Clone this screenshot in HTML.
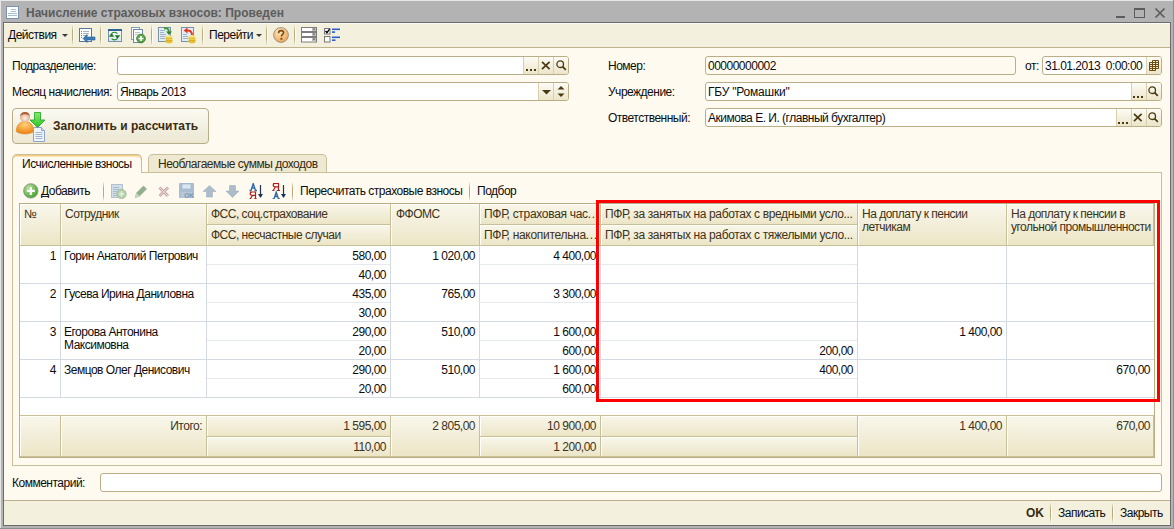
<!DOCTYPE html>
<html><head><meta charset="utf-8"><style>
*{box-sizing:border-box}
html,body{margin:0;padding:0}
body{width:1174px;height:529px;overflow:hidden;position:relative;background:#b3b3b3;font-family:"Liberation Sans",sans-serif;font-size:11px;color:#0c0c0c}
.a{position:absolute}
.t{position:absolute;white-space:nowrap;line-height:13px;font-size:12px;letter-spacing:-0.5px}
.inp{position:absolute;background:#fff;border:1px solid #b9ae86;border-radius:3px;height:19px;overflow:hidden}
.ib{position:absolute;top:0;bottom:0;width:15px;border-left:1px solid #d8cfae;background:linear-gradient(#fdfcf6,#ece5c9)}
svg{position:absolute}
</style></head><body>
<div class="a" style="left:0px;top:0px;width:1174px;height:1px;background:#e6e6e6"></div>
<div class="a" style="left:0px;top:0px;width:1px;height:529px;background:#e6e6e6"></div>
<div class="a" style="left:1173px;top:0px;width:1px;height:529px;background:#8e8e8e"></div>
<div class="a" style="left:0px;top:528px;width:1174px;height:1px;background:#8e8e8e"></div>
<svg style="left:6px;top:6px" width="13" height="13"><rect x="0.5" y="0.5" width="12" height="12" fill="#fdfeff" stroke="#7b93b0"/><path d="M5 3.5h5M5 5.5h5M2 7.5h9M2 9.5h9" stroke="#aabcd0" stroke-width="1"/></svg>
<div class="t" style="left:26px;top:7px;font-size:12px;font-weight:bold;letter-spacing:0;color:#5c5c5c">Начисление страховых взносов: Проведен</div>
<div class="a" style="left:1116px;top:16px;width:9px;height:2px;background:#5c5c5c"></div>
<div class="a" style="left:1134px;top:8px;width:11px;height:10px;border:1px solid #5c5c5c;border-top-width:2px"></div>
<svg style="left:1154px;top:7px" width="12" height="12"><path d="M1.5 1.5L10.5 10.5M10.5 1.5L1.5 10.5" stroke="#5c5c5c" stroke-width="1.7"/></svg>
<div class="a" style="left:3px;top:22px;width:1168px;height:504px;border:1px solid #6c6c6c;background:#fefaf0"></div>
<div class="a" style="left:4px;top:23px;width:1166px;height:24px;background:#f3f0de;border-top:1px solid #fdfcf4"></div>
<div class="a" style="left:4px;top:47px;width:1166px;height:1px;background:#bdb28b"></div>
<div class="t" style="left:8px;top:29px;">Действия</div>
<svg style="left:62px;top:34px" width="6" height="3"><path d="M0 0h6L3 3z" fill="#3a3a3a"/></svg>
<div class="a" style="left:72px;top:25px;width:1px;height:20px;background:linear-gradient(rgba(184,170,120,0.1),#b9ab7c 30%,#b9ab7c 70%,rgba(184,170,120,0.1))"></div>
<div class="a" style="left:73px;top:25px;width:1px;height:20px;background:linear-gradient(rgba(255,255,255,0.2),#fffff8 30%,#fffff8 70%,rgba(255,255,255,0.2))"></div>
<div class="a" style="left:100px;top:25px;width:1px;height:20px;background:linear-gradient(rgba(184,170,120,0.1),#b9ab7c 30%,#b9ab7c 70%,rgba(184,170,120,0.1))"></div>
<div class="a" style="left:101px;top:25px;width:1px;height:20px;background:linear-gradient(rgba(255,255,255,0.2),#fffff8 30%,#fffff8 70%,rgba(255,255,255,0.2))"></div>
<div class="a" style="left:151px;top:25px;width:1px;height:20px;background:linear-gradient(rgba(184,170,120,0.1),#b9ab7c 30%,#b9ab7c 70%,rgba(184,170,120,0.1))"></div>
<div class="a" style="left:152px;top:25px;width:1px;height:20px;background:linear-gradient(rgba(255,255,255,0.2),#fffff8 30%,#fffff8 70%,rgba(255,255,255,0.2))"></div>
<div class="a" style="left:202px;top:25px;width:1px;height:20px;background:linear-gradient(rgba(184,170,120,0.1),#b9ab7c 30%,#b9ab7c 70%,rgba(184,170,120,0.1))"></div>
<div class="a" style="left:203px;top:25px;width:1px;height:20px;background:linear-gradient(rgba(255,255,255,0.2),#fffff8 30%,#fffff8 70%,rgba(255,255,255,0.2))"></div>
<div class="a" style="left:266px;top:25px;width:1px;height:20px;background:linear-gradient(rgba(184,170,120,0.1),#b9ab7c 30%,#b9ab7c 70%,rgba(184,170,120,0.1))"></div>
<div class="a" style="left:267px;top:25px;width:1px;height:20px;background:linear-gradient(rgba(255,255,255,0.2),#fffff8 30%,#fffff8 70%,rgba(255,255,255,0.2))"></div>
<div class="a" style="left:294px;top:25px;width:1px;height:20px;background:linear-gradient(rgba(184,170,120,0.1),#b9ab7c 30%,#b9ab7c 70%,rgba(184,170,120,0.1))"></div>
<div class="a" style="left:295px;top:25px;width:1px;height:20px;background:linear-gradient(rgba(255,255,255,0.2),#fffff8 30%,#fffff8 70%,rgba(255,255,255,0.2))"></div>
<div class="t" style="left:209px;top:29px;">Перейти</div>
<svg style="left:256px;top:34px" width="6" height="3"><path d="M0 0h6L3 3z" fill="#3a3a3a"/></svg>
<div class="t" style="left:12px;top:60px;">Подразделение:</div>
<div class="t" style="left:12px;top:86px;">Месяц начисления:</div>
<div class="inp" style="left:117px;top:56px;width:452px"><div class="ib" style="left:405px"></div><div class="ib" style="left:420px"></div><div class="ib" style="left:435px"></div></div>
<div class="inp" style="left:117px;top:82px;width:452px"><div class="t" style="left:2px;top:3px">Январь 2013</div><div class="ib" style="left:420px"></div><div class="ib" style="left:435px"></div></div>
<div class="t" style="left:608px;top:60px;">Номер:</div>
<div class="t" style="left:608px;top:86px;">Учреждение:</div>
<div class="t" style="left:608px;top:112px;">Ответственный:</div>
<div class="inp" style="left:705px;top:56px;width:311px;background:#fefaf0"><div class="t" style="left:2px;top:3px">00000000002</div></div>
<div class="t" style="left:1025px;top:60px;">от:</div>
<div class="inp" style="left:1042px;top:56px;width:120px"><div class="t" style="left:2px;top:3px">31.01.2013&nbsp; 0:00:00</div><div class="ib" style="left:103px"></div></div>
<div class="inp" style="left:705px;top:82px;width:457px"><div class="t" style="left:2px;top:3px;letter-spacing:-0.2px">ГБУ "Ромашки"</div><div class="ib" style="left:425px"></div><div class="ib" style="left:440px"></div></div>
<div class="inp" style="left:705px;top:108px;width:457px"><div class="t" style="left:2px;top:3px">Акимова Е. И. (главный бухгалтер)</div><div class="ib" style="left:410px"></div><div class="ib" style="left:425px"></div><div class="ib" style="left:440px"></div></div>
<div class="a" style="left:12px;top:108px;width:197px;height:36px;border:1px solid #b9ae86;border-radius:4px;background:linear-gradient(#fbfaf3,#ece7d2)"></div>
<div class="t" style="left:53px;top:120px;font-size:12px;font-weight:bold;letter-spacing:0;color:#3a2c10">Заполнить и рассчитать</div>
<div class="a" style="left:148px;top:154px;width:179px;height:19px;border:1px solid #c8be98;border-bottom:none;border-radius:5px 5px 0 0;background:#efe9d3"></div>
<div class="t" style="left:158px;top:158px;color:#33280e">Необлагаемые суммы доходов</div>
<div class="a" style="left:12px;top:172px;width:1150px;height:294px;border:1px solid #c8be98;background:#fefaf0"></div>
<div class="a" style="left:12px;top:154px;width:130px;height:19px;border:1px solid #c8be98;border-bottom:none;border-radius:5px 5px 0 0;background:#fefaf0;box-shadow:inset 0 1px 0 #f6cb7e,inset 0 2px 0 #fae3b4"></div>
<div class="t" style="left:22px;top:158px;">Исчисленные взносы</div>
<div class="t" style="left:41px;top:185px;">Добавить</div>
<div class="a" style="left:103px;top:182px;width:1px;height:19px;background:linear-gradient(rgba(184,170,120,0.1),#b9ab7c 30%,#b9ab7c 70%,rgba(184,170,120,0.1))"></div>
<div class="a" style="left:104px;top:182px;width:1px;height:19px;background:linear-gradient(rgba(255,255,255,0.2),#fffff8 30%,#fffff8 70%,rgba(255,255,255,0.2))"></div>
<div class="a" style="left:292px;top:182px;width:1px;height:19px;background:linear-gradient(rgba(184,170,120,0.1),#b9ab7c 30%,#b9ab7c 70%,rgba(184,170,120,0.1))"></div>
<div class="a" style="left:293px;top:182px;width:1px;height:19px;background:linear-gradient(rgba(255,255,255,0.2),#fffff8 30%,#fffff8 70%,rgba(255,255,255,0.2))"></div>
<div class="a" style="left:469px;top:182px;width:1px;height:19px;background:linear-gradient(rgba(184,170,120,0.1),#b9ab7c 30%,#b9ab7c 70%,rgba(184,170,120,0.1))"></div>
<div class="a" style="left:470px;top:182px;width:1px;height:19px;background:linear-gradient(rgba(255,255,255,0.2),#fffff8 30%,#fffff8 70%,rgba(255,255,255,0.2))"></div>
<div class="t" style="left:300px;top:185px;">Пересчитать страховые взносы</div>
<div class="t" style="left:477px;top:185px;">Подбор</div>
<div class="a" style="left:19px;top:203px;width:1136px;height:255px;border:1px solid #b9ae86;background:#fff"></div>
<div class="a" style="left:20px;top:204px;width:1134px;height:1px;background:#fff"></div>
<div class="a" style="left:20px;top:204px;width:41px;height:42px;background:linear-gradient(#f9f7ec,#ece5c6);border-right:1px solid #c9bf99;border-bottom:1px solid #c9bf99;box-shadow:inset 1px 1px 0 #fffef9"></div>
<div class="a" style="left:61px;top:204px;width:146px;height:42px;background:linear-gradient(#f9f7ec,#ece5c6);border-right:1px solid #c9bf99;border-bottom:1px solid #c9bf99;box-shadow:inset 1px 1px 0 #fffef9"></div>
<div class="a" style="left:207px;top:204px;width:184px;height:21px;background:linear-gradient(#f9f7ec,#ece5c6);border-right:1px solid #c9bf99;border-bottom:1px solid #c9bf99;box-shadow:inset 1px 1px 0 #fffef9"></div>
<div class="a" style="left:207px;top:225px;width:184px;height:21px;background:linear-gradient(#f9f7ec,#ece5c6);border-right:1px solid #c9bf99;border-bottom:1px solid #c9bf99;box-shadow:inset 1px 1px 0 #fffef9"></div>
<div class="a" style="left:391px;top:204px;width:89px;height:42px;background:linear-gradient(#f9f7ec,#ece5c6);border-right:1px solid #c9bf99;border-bottom:1px solid #c9bf99;box-shadow:inset 1px 1px 0 #fffef9"></div>
<div class="a" style="left:480px;top:204px;width:121px;height:21px;background:linear-gradient(#f9f7ec,#ece5c6);border-right:1px solid #c9bf99;border-bottom:1px solid #c9bf99;box-shadow:inset 1px 1px 0 #fffef9"></div>
<div class="a" style="left:480px;top:225px;width:121px;height:21px;background:linear-gradient(#f9f7ec,#ece5c6);border-right:1px solid #c9bf99;border-bottom:1px solid #c9bf99;box-shadow:inset 1px 1px 0 #fffef9"></div>
<div class="a" style="left:601px;top:204px;width:257px;height:21px;background:linear-gradient(#f9f7ec,#ece5c6);border-right:1px solid #c9bf99;border-bottom:1px solid #c9bf99;box-shadow:inset 1px 1px 0 #fffef9"></div>
<div class="a" style="left:601px;top:225px;width:257px;height:21px;background:linear-gradient(#f9f7ec,#ece5c6);border-right:1px solid #c9bf99;border-bottom:1px solid #c9bf99;box-shadow:inset 1px 1px 0 #fffef9"></div>
<div class="a" style="left:858px;top:204px;width:149px;height:42px;background:linear-gradient(#f9f7ec,#ece5c6);border-right:1px solid #c9bf99;border-bottom:1px solid #c9bf99;box-shadow:inset 1px 1px 0 #fffef9"></div>
<div class="a" style="left:1007px;top:204px;width:147px;height:42px;background:linear-gradient(#f9f7ec,#ece5c6);border-right:1px solid #c9bf99;border-bottom:1px solid #c9bf99;box-shadow:inset 1px 1px 0 #fffef9"></div>
<div class="t" style="left:24px;top:208px;color:#3e3216">№</div>
<div class="t" style="left:65px;top:208px;color:#3e3216">Сотрудник</div>
<div class="t" style="left:211px;top:208px;color:#3e3216">ФСС, соц.страхование</div>
<div class="t" style="left:211px;top:229px;color:#3e3216">ФСС, несчастные случаи</div>
<div class="t" style="left:396px;top:208px;color:#3e3216">ФФОМС</div>
<div class="t" style="left:484px;top:208px;color:#3e3216;letter-spacing:-0.3px">ПФР, страховая час<span style="letter-spacing:0.6px">...</span></div>
<div class="t" style="left:484px;top:229px;color:#3e3216;letter-spacing:-0.3px">ПФР, накопительна<span style="letter-spacing:0.6px">...</span></div>
<div class="t" style="left:605px;top:208px;color:#3e3216;letter-spacing:-0.37px">ПФР, за занятых на работах с вредными усло...</div>
<div class="t" style="left:605px;top:229px;color:#3e3216;letter-spacing:-0.37px">ПФР, за занятых на работах с тяжелыми усло...</div>
<div class="t" style="left:862px;top:208px;color:#3e3216">На доплату к пенсии</div>
<div class="t" style="left:862px;top:221px;color:#3e3216">летчикам</div>
<div class="t" style="left:1011px;top:208px;color:#3e3216">На доплату к пенсии в</div>
<div class="t" style="left:1011px;top:221px;color:#3e3216">угольной промышленности</div>
<div class="a" style="left:20px;top:283px;width:1134px;height:1px;background:#d4dae2"></div>
<div class="a" style="left:207px;top:264px;width:183px;height:1px;background:#e6e9ee"></div>
<div class="a" style="left:480px;top:264px;width:120px;height:1px;background:#e6e9ee"></div>
<div class="a" style="left:601px;top:264px;width:256px;height:1px;background:#e6e9ee"></div>
<div class="a" style="left:20px;top:321px;width:1134px;height:1px;background:#d4dae2"></div>
<div class="a" style="left:207px;top:302px;width:183px;height:1px;background:#e6e9ee"></div>
<div class="a" style="left:480px;top:302px;width:120px;height:1px;background:#e6e9ee"></div>
<div class="a" style="left:601px;top:302px;width:256px;height:1px;background:#e6e9ee"></div>
<div class="a" style="left:20px;top:359px;width:1134px;height:1px;background:#d4dae2"></div>
<div class="a" style="left:207px;top:340px;width:183px;height:1px;background:#e6e9ee"></div>
<div class="a" style="left:480px;top:340px;width:120px;height:1px;background:#e6e9ee"></div>
<div class="a" style="left:601px;top:340px;width:256px;height:1px;background:#e6e9ee"></div>
<div class="a" style="left:20px;top:397px;width:1134px;height:1px;background:#d4dae2"></div>
<div class="a" style="left:207px;top:378px;width:183px;height:1px;background:#e6e9ee"></div>
<div class="a" style="left:480px;top:378px;width:120px;height:1px;background:#e6e9ee"></div>
<div class="a" style="left:601px;top:378px;width:256px;height:1px;background:#e6e9ee"></div>
<div class="a" style="left:60px;top:246px;width:1px;height:151px;background:#d4dae2"></div>
<div class="a" style="left:206px;top:246px;width:1px;height:151px;background:#d4dae2"></div>
<div class="a" style="left:390px;top:246px;width:1px;height:151px;background:#d4dae2"></div>
<div class="a" style="left:479px;top:246px;width:1px;height:151px;background:#d4dae2"></div>
<div class="a" style="left:600px;top:246px;width:1px;height:151px;background:#d4dae2"></div>
<div class="a" style="left:857px;top:246px;width:1px;height:151px;background:#d4dae2"></div>
<div class="a" style="left:1006px;top:246px;width:1px;height:151px;background:#d4dae2"></div>
<div class="t" style="right:1118px;top:250px;">1</div>
<div class="t" style="left:64px;top:250px;">Горин Анатолий Петрович</div>
<div class="t" style="right:788px;top:250px;">580,00</div>
<div class="t" style="right:788px;top:269px;">40,00</div>
<div class="t" style="right:699px;top:250px;">1 020,00</div>
<div class="t" style="right:578px;top:250px;">4 400,00</div>
<div class="t" style="right:578px;top:269px;"></div>
<div class="t" style="right:321px;top:250px;"></div>
<div class="t" style="right:321px;top:269px;"></div>
<div class="t" style="right:172px;top:250px;"></div>
<div class="t" style="right:24px;top:250px;"></div>
<div class="t" style="right:1118px;top:288px;">2</div>
<div class="t" style="left:64px;top:288px;">Гусева Ирина Даниловна</div>
<div class="t" style="right:788px;top:288px;">435,00</div>
<div class="t" style="right:788px;top:307px;">30,00</div>
<div class="t" style="right:699px;top:288px;">765,00</div>
<div class="t" style="right:578px;top:288px;">3 300,00</div>
<div class="t" style="right:578px;top:307px;"></div>
<div class="t" style="right:321px;top:288px;"></div>
<div class="t" style="right:321px;top:307px;"></div>
<div class="t" style="right:172px;top:288px;"></div>
<div class="t" style="right:24px;top:288px;"></div>
<div class="t" style="right:1118px;top:326px;">3</div>
<div class="t" style="left:64px;top:326px;">Егорова Антонина</div>
<div class="t" style="left:64px;top:339px;">Максимовна</div>
<div class="t" style="right:788px;top:326px;">290,00</div>
<div class="t" style="right:788px;top:345px;">20,00</div>
<div class="t" style="right:699px;top:326px;">510,00</div>
<div class="t" style="right:578px;top:326px;">1 600,00</div>
<div class="t" style="right:578px;top:345px;">600,00</div>
<div class="t" style="right:321px;top:326px;"></div>
<div class="t" style="right:321px;top:345px;">200,00</div>
<div class="t" style="right:172px;top:326px;">1 400,00</div>
<div class="t" style="right:24px;top:326px;"></div>
<div class="t" style="right:1118px;top:364px;">4</div>
<div class="t" style="left:64px;top:364px;">Земцов Олег Денисович</div>
<div class="t" style="right:788px;top:364px;">290,00</div>
<div class="t" style="right:788px;top:383px;">20,00</div>
<div class="t" style="right:699px;top:364px;">510,00</div>
<div class="t" style="right:578px;top:364px;">1 600,00</div>
<div class="t" style="right:578px;top:383px;">600,00</div>
<div class="t" style="right:321px;top:364px;">400,00</div>
<div class="t" style="right:321px;top:383px;"></div>
<div class="t" style="right:172px;top:364px;"></div>
<div class="t" style="right:24px;top:364px;">670,00</div>
<div class="a" style="left:20px;top:415px;width:1134px;height:1px;background:#c9bf99"></div>
<div class="a" style="left:20px;top:416px;width:41px;height:41px;background:linear-gradient(#f9f7ec,#ece5c6);border-right:1px solid #c9bf99;border-bottom:1px solid #c9bf99;box-shadow:inset 1px 1px 0 #fffef9"></div>
<div class="a" style="left:61px;top:416px;width:146px;height:41px;background:linear-gradient(#f9f7ec,#ece5c6);border-right:1px solid #c9bf99;border-bottom:1px solid #c9bf99;box-shadow:inset 1px 1px 0 #fffef9"></div>
<div class="a" style="left:207px;top:416px;width:184px;height:21px;background:linear-gradient(#f9f7ec,#ece5c6);border-right:1px solid #c9bf99;border-bottom:1px solid #c9bf99;box-shadow:inset 1px 1px 0 #fffef9"></div>
<div class="a" style="left:207px;top:437px;width:184px;height:20px;background:linear-gradient(#f9f7ec,#ece5c6);border-right:1px solid #c9bf99;border-bottom:1px solid #c9bf99;box-shadow:inset 1px 1px 0 #fffef9"></div>
<div class="a" style="left:391px;top:416px;width:89px;height:41px;background:linear-gradient(#f9f7ec,#ece5c6);border-right:1px solid #c9bf99;border-bottom:1px solid #c9bf99;box-shadow:inset 1px 1px 0 #fffef9"></div>
<div class="a" style="left:480px;top:416px;width:121px;height:21px;background:linear-gradient(#f9f7ec,#ece5c6);border-right:1px solid #c9bf99;border-bottom:1px solid #c9bf99;box-shadow:inset 1px 1px 0 #fffef9"></div>
<div class="a" style="left:480px;top:437px;width:121px;height:20px;background:linear-gradient(#f9f7ec,#ece5c6);border-right:1px solid #c9bf99;border-bottom:1px solid #c9bf99;box-shadow:inset 1px 1px 0 #fffef9"></div>
<div class="a" style="left:601px;top:416px;width:257px;height:21px;background:linear-gradient(#f9f7ec,#ece5c6);border-right:1px solid #c9bf99;border-bottom:1px solid #c9bf99;box-shadow:inset 1px 1px 0 #fffef9"></div>
<div class="a" style="left:601px;top:437px;width:257px;height:20px;background:linear-gradient(#f9f7ec,#ece5c6);border-right:1px solid #c9bf99;border-bottom:1px solid #c9bf99;box-shadow:inset 1px 1px 0 #fffef9"></div>
<div class="a" style="left:858px;top:416px;width:149px;height:41px;background:linear-gradient(#f9f7ec,#ece5c6);border-right:1px solid #c9bf99;border-bottom:1px solid #c9bf99;box-shadow:inset 1px 1px 0 #fffef9"></div>
<div class="a" style="left:1007px;top:416px;width:147px;height:41px;background:linear-gradient(#f9f7ec,#ece5c6);border-right:1px solid #c9bf99;border-bottom:1px solid #c9bf99;box-shadow:inset 1px 1px 0 #fffef9"></div>
<div class="t" style="right:972px;top:420px;color:#3c3322">Итого:</div>
<div class="t" style="right:788px;top:420px;color:#3c3322">1 595,00</div>
<div class="t" style="right:788px;top:441px;color:#3c3322">110,00</div>
<div class="t" style="right:699px;top:420px;color:#3c3322">2 805,00</div>
<div class="t" style="right:578px;top:420px;color:#3c3322">10 900,00</div>
<div class="t" style="right:578px;top:441px;color:#3c3322">1 200,00</div>
<div class="t" style="right:172px;top:420px;color:#3c3322">1 400,00</div>
<div class="t" style="right:24px;top:420px;color:#3c3322">670,00</div>
<div class="a" style="left:596px;top:200px;width:564px;height:202px;border:3px solid #ff0000"></div>
<svg style="left:79px;top:28px" width="17" height="16" viewBox="0 0 17 16"><rect x="0.5" y="0.5" width="12" height="13" fill="#fff" stroke="#56789a"/><path d="M2 3.5h1M2 5.5h1M2 7.5h1M2 9.5h1" stroke="#4f86c0"/><path d="M4 3.5h6M4 5.5h6M4 7.5h5" stroke="#a9b4be"/><path d="M4 10.5L8 6.5V9H16V12H8V14.5Z" fill="#3b7bb5" stroke="#2d6294" stroke-width="0.6"/></svg>
<svg style="left:108px;top:29px" width="14" height="13" viewBox="0 0 14 13"><defs><linearGradient id="wg" x1="0" y1="0" x2="0" y2="1"><stop offset="0" stop-color="#fbfdff"/><stop offset="1" stop-color="#d8e4ef"/></linearGradient></defs><rect x="0.5" y="0.5" width="13" height="12" fill="url(#wg)" stroke="#7a92aa"/><rect x="0" y="0" width="14" height="2" fill="#2f6596"/><path d="M3.6 4.6A3.9 3.9 0 0 1 9.4 4.6M9.4 9.6A3.9 3.9 0 0 1 3.6 9.6" fill="none" stroke="#2a8a2a" stroke-width="1.1"/><path d="M0.8 7.8h5.4L3.5 4z" fill="#1f7a1f"/><path d="M6.8 6.2h5.4L9.5 10z" fill="#1f7a1f"/></svg>
<svg style="left:131px;top:27px" width="15" height="17" viewBox="0 0 15 17"><rect x="0.5" y="0.5" width="8" height="12" fill="#fff" stroke="#8c9db2"/><rect x="2.5" y="2.5" width="9" height="13" fill="#fff" stroke="#6d87a6"/><path d="M4 5.5h5M4 7.5h3" stroke="#b5bec8"/><circle cx="10" cy="11.5" r="4.3" fill="#5aa548" stroke="#3e7d35"/><path d="M10 9v5M7.5 11.5h5" stroke="#fff" stroke-width="1.6"/></svg>
<svg style="left:158px;top:27px" width="16" height="17" viewBox="0 0 16 17"><rect x="0.5" y="0.5" width="12" height="14" fill="#e3edf7" stroke="#7a90a8"/><path d="M2 3.5h5M2 5.5h4M2 7.5h6M2 9.5h5M2 11.5h5" stroke="#9fb2c6"/><path d="M6 1.5C9 0.5 11 2 10.8 5" fill="none" stroke="#3c9a32" stroke-width="2"/><path d="M8 4.5h6l-3 3.5z" fill="#2d8a26"/><ellipse cx="11" cy="14.5" rx="3.6" ry="1.8" fill="#e6c02c"/><ellipse cx="11" cy="12.2" rx="3.6" ry="1.8" fill="#f2d44a"/><ellipse cx="11" cy="10" rx="3.6" ry="1.7" fill="#f7e27a"/><path d="M7.6 11.2h6.8M7.6 13.4h6.8" stroke="#c89a10" stroke-width="0.7"/></svg>
<svg style="left:181px;top:27px" width="16" height="17" viewBox="0 0 16 17"><rect x="0.5" y="0.5" width="12" height="14" fill="#e3edf7" stroke="#7a90a8"/><path d="M2 7.5h4M2 9.5h5M2 11.5h5" stroke="#9fb2c6"/><path d="M11 8C11 4 8.5 3 5.5 3.5" fill="none" stroke="#e03a20" stroke-width="2"/><path d="M2.5 3.5L6.5 0.5V6.5z" fill="#e03a20"/><ellipse cx="11" cy="14.5" rx="3.6" ry="1.8" fill="#e6c02c"/><ellipse cx="11" cy="12.2" rx="3.6" ry="1.8" fill="#f2d44a"/><ellipse cx="11" cy="10" rx="3.6" ry="1.7" fill="#f7e27a"/><path d="M7.6 11.2h6.8M7.6 13.4h6.8" stroke="#c89a10" stroke-width="0.7"/></svg>
<svg style="left:273px;top:27px" width="17" height="17" viewBox="0 0 17 17"><defs><radialGradient id="hg" cx="0.4" cy="0.3" r="0.8"><stop offset="0" stop-color="#fde7bf"/><stop offset="1" stop-color="#eda048"/></radialGradient></defs><circle cx="8" cy="8" r="7.4" fill="url(#hg)" stroke="#9a8a78" stroke-width="0.9"/><path d="M5.6 6.2C5.6 4.4 6.8 3.6 8.1 3.6C9.6 3.6 10.6 4.5 10.6 5.8C10.6 7.4 8.4 7.6 8.4 9.6" fill="none" stroke="#7b4a1c" stroke-width="1.6"/><rect x="7.4" y="10.9" width="2" height="1.8" fill="#7b4a1c"/></svg>
<svg style="left:301px;top:27px" width="16" height="16" viewBox="0 0 16 16"><g fill="#fff" stroke="#7c7c7c"><rect x="0.5" y="0.5" width="15" height="4"/><rect x="0.5" y="5.5" width="15" height="4"/><rect x="0.5" y="10.5" width="15" height="4.5"/></g><g fill="#bdbdbd"><rect x="11" y="1" width="4" height="3"/><rect x="11" y="6" width="4" height="3"/><rect x="11" y="11" width="4" height="3.5"/></g><path d="M12 1.8h2l-1 1.2zM12 6.8h2l-1 1.2zM12 11.8h2l-1 1.2z" fill="#222"/></svg>
<svg style="left:324px;top:28px" width="17" height="15" viewBox="0 0 17 15"><rect x="0.5" y="0.5" width="5.5" height="5.5" fill="#fff" stroke="#777"/><rect x="0.5" y="8.5" width="5.5" height="5.5" fill="#fff" stroke="#777"/><path d="M1.5 3L3 4.6L5.5 1.2" fill="none" stroke="#000" stroke-width="1.4"/><g fill="#2a5fd0"><rect x="8" y="0.5" width="8" height="1.6"/><rect x="8" y="3.3" width="3" height="1.6"/><rect x="8" y="8.5" width="8" height="1.6"/><rect x="8" y="11.4" width="3.5" height="1.6"/></g></svg>
<svg style="left:526px;top:69px" width="11" height="3" viewBox="0 0 11 3"><g fill="#4a3a12"><rect x="0" y="0" width="2" height="2"/><rect x="4" y="0" width="2" height="2"/><rect x="8" y="0" width="2" height="2"/></g></svg>
<svg style="left:541px;top:61px" width="10" height="9" viewBox="0 0 10 9"><path d="M1 0.8L8.6 8.2M8.6 0.8L1 8.2" stroke="#4a3a12" stroke-width="1.7"/></svg>
<svg style="left:556px;top:60px" width="11" height="11" viewBox="0 0 11 11"><circle cx="4.2" cy="4.2" r="3.3" fill="none" stroke="#4a3a12" stroke-width="1.3"/><path d="M6.6 6.6L9.8 9.8" stroke="#4a3a12" stroke-width="1.8"/></svg>
<svg style="left:542px;top:90px" width="9" height="5" viewBox="0 0 9 5"><path d="M0 0h9L4.5 4.5z" fill="#4a3a12"/></svg>
<svg style="left:557px;top:86px" width="8" height="12" viewBox="0 0 8 12"><path d="M0.5 3.5h7L4 0z" fill="#4a3a12"/><path d="M0.5 7.5h7L4 11z" fill="#4a3a12"/></svg>
<svg style="left:1149px;top:60px" width="10" height="11" viewBox="0 0 10 11"><g fill="none" stroke="#6b4a0a" stroke-width="1"><path d="M3.5 0.5h6v8h-3M0.5 2.5h9M0.5 4.5h9M0.5 6.5h9M0.5 8.5h6M0.5 2.5v8h6v-2M3.5 0.5v10M6.5 0.5v10"/></g></svg>
<svg style="left:1133px;top:96px" width="11" height="3" viewBox="0 0 11 3"><g fill="#4a3a12"><rect x="0" y="0" width="2" height="2"/><rect x="4" y="0" width="2" height="2"/><rect x="8" y="0" width="2" height="2"/></g></svg>
<svg style="left:1148px;top:86px" width="11" height="11" viewBox="0 0 11 11"><circle cx="4.2" cy="4.2" r="3.3" fill="none" stroke="#4a3a12" stroke-width="1.3"/><path d="M6.6 6.6L9.8 9.8" stroke="#4a3a12" stroke-width="1.8"/></svg>
<svg style="left:1118px;top:122px" width="11" height="3" viewBox="0 0 11 3"><g fill="#4a3a12"><rect x="0" y="0" width="2" height="2"/><rect x="4" y="0" width="2" height="2"/><rect x="8" y="0" width="2" height="2"/></g></svg>
<svg style="left:1133px;top:113px" width="10" height="9" viewBox="0 0 10 9"><path d="M1 0.8L8.6 8.2M8.6 0.8L1 8.2" stroke="#4a3a12" stroke-width="1.7"/></svg>
<svg style="left:1148px;top:112px" width="11" height="11" viewBox="0 0 11 11"><circle cx="4.2" cy="4.2" r="3.3" fill="none" stroke="#4a3a12" stroke-width="1.3"/><path d="M6.6 6.6L9.8 9.8" stroke="#4a3a12" stroke-width="1.8"/></svg>
<svg style="left:15px;top:110px" width="32" height="33" viewBox="0 0 32 33"><defs><radialGradient id="fh" cx="0.5" cy="0.6" r="0.6"><stop offset="0" stop-color="#fff0e4"/><stop offset="1" stop-color="#d9a07a"/></radialGradient><radialGradient id="fb" cx="0.5" cy="0.25" r="0.85"><stop offset="0" stop-color="#ffd27a"/><stop offset="0.6" stop-color="#f39a2e"/><stop offset="1" stop-color="#e27418"/></radialGradient><linearGradient id="ga" x1="0" y1="0" x2="0" y2="1"><stop offset="0" stop-color="#7ef06a"/><stop offset="1" stop-color="#30c028"/></linearGradient></defs><path d="M1.2 21.5C1.2 15.5 4.5 11.5 10 11.5C15.5 11.5 18.8 15.5 18.8 21.5C15 24.8 5 24.8 1.2 21.5z" fill="url(#fb)" stroke="#e08a20" stroke-width="0.6"/><circle cx="10" cy="7.2" r="5" fill="url(#fh)"/><path d="M5.2 6.2C5.5 3 7.5 2 10 2C12.8 2 14.6 3.5 14.9 6.2C13.5 4.6 12 4.2 10 4.2C8 4.2 6.5 4.8 5.2 6.2z" fill="#a8603a"/><path d="M18.5 17.5h8l3 3v11h-11z" fill="#eef4fb" stroke="#8aa6cc"/><path d="M26.5 17.5v3h3" fill="#d0e0f4" stroke="#8aa6cc"/><path d="M20.5 22.5h7M20.5 24.5h7M20.5 26.5h7M20.5 28.5h7" stroke="#a6b6c8"/><path d="M19.5 2.5h6v7.5h4.5L22.5 17.5L15 10h4.5z" fill="url(#ga)" stroke="#22a022" stroke-width="0.8"/></svg>
<svg style="left:23px;top:183px" width="16" height="16" viewBox="0 0 16 16"><defs><radialGradient id="ag" cx="0.35" cy="0.3" r="0.8"><stop offset="0" stop-color="#b6e29a"/><stop offset="1" stop-color="#3f9a2c"/></radialGradient></defs><circle cx="7.8" cy="7.9" r="7.2" fill="url(#ag)" stroke="#8a9a88" stroke-width="0.9"/><path d="M7.8 3.9v8M3.8 7.9h8" stroke="#fff" stroke-width="2.2"/></svg>
<div class="a" style="left:41px;top:196px;width:8px;height:1px;background:#222"></div>
<svg style="left:111px;top:184px" width="16" height="15" viewBox="0 0 16 15"><rect x="0.5" y="0.5" width="11" height="13" fill="#d3dde8" stroke="#b3c1d0"/><path d="M2 3.5h6M2 5.5h6M2 7.5h4M2 9.5h4M2 11.5h4" stroke="#a9bdd3"/><circle cx="10.5" cy="10" r="4.6" fill="#b5d2ab" stroke="#a2bf9a"/><path d="M10.5 7.5v5M8 10h5" stroke="#e5eee2" stroke-width="1.6"/></svg>
<svg style="left:135px;top:185px" width="12" height="13" viewBox="0 0 12 13"><path d="M0.5 12.5L1.5 8L8.5 1L11.5 4L4.5 11z" fill="#92ae90" stroke="#86a285" stroke-width="0.6"/><path d="M0.5 12.5L1.5 8L4.5 11z" fill="#c9d8c6"/></svg>
<svg style="left:158px;top:186px" width="12" height="12" viewBox="0 0 12 12"><path d="M1.5 1.5L10 10M10 1.5L1.5 10" stroke="#c9a9ab" stroke-width="3"/><path d="M1.5 1.5L10 10M10 1.5L1.5 10" stroke="#ecdcdc" stroke-width="1"/></svg>
<svg style="left:179px;top:183px" width="16" height="16" viewBox="0 0 16 16"><rect x="0" y="0" width="15" height="15" fill="#a9bed2" rx="1"/><rect x="3" y="1" width="9" height="5" fill="#d8e6ee" stroke="#9fb3c6" stroke-width="0.6"/><rect x="2" y="9" width="11" height="6" fill="#b8c8d6"/><text x="5.2" y="14.8" font-family="Liberation Sans" font-size="6.5" font-weight="bold" fill="#8098ad">OK</text></svg>
<svg style="left:203px;top:185px" width="14" height="13" viewBox="0 0 14 13"><path d="M6.5 0.5L13 6.5H9.5V12H3.5V6.5H0z" fill="#adbccb" stroke="#9fb0c0" stroke-width="0.6"/></svg>
<svg style="left:226px;top:185px" width="14" height="13" viewBox="0 0 14 13"><path d="M3.5 0.5H9.5V6H13L6.5 12.5L0 6H3.5z" fill="#adbccb" stroke="#9fb0c0" stroke-width="0.6"/></svg>
<svg style="left:249px;top:183px" width="15" height="16" viewBox="0 0 15 16"><g><path d="M0.5 7.5h2M5.5 7.5h2.5M2 7.5L4.2 0.5L6.5 7.5M2.7 5h3" fill="none" stroke="#2a66a6" stroke-width="1.3"/></g><g transform="translate(0,8.5)"><path d="M6.5 0.5v7M5 7.5h3M1 0.5h6M6.5 3.8H3.2C1.8 3.8 1.2 3 1.2 2.2C1.2 1.2 2 0.5 3.2 0.5M3.5 3.8L1.2 7.5M0.3 7.5h2" fill="none" stroke="#b01c1c" stroke-width="1.2"/></g><path d="M11.5 2v12" stroke="#1d3350" stroke-width="1.2"/><path d="M9 11h5l-2.5 4z" fill="#1d3350"/></svg>
<svg style="left:272px;top:183px" width="15" height="16" viewBox="0 0 15 16"><g transform="translate(0,0)"><path d="M6.5 0.5v7M5 7.5h3M1 0.5h6M6.5 3.8H3.2C1.8 3.8 1.2 3 1.2 2.2C1.2 1.2 2 0.5 3.2 0.5M3.5 3.8L1.2 7.5M0.3 7.5h2" fill="none" stroke="#b01c1c" stroke-width="1.2"/></g><g transform="translate(0,8.5)"><path d="M0.5 7.5h2M5.5 7.5h2.5M2 7.5L4.2 0.5L6.5 7.5M2.7 5h3" fill="none" stroke="#2a66a6" stroke-width="1.3"/></g><path d="M11.5 2v12" stroke="#1d3350" stroke-width="1.2"/><path d="M9 11h5l-2.5 4z" fill="#1d3350"/></svg>
<div class="t" style="left:12px;top:477px;">Комментарий:</div>
<div class="inp" style="left:100px;top:473px;width:1062px"></div>
<div class="a" style="left:4px;top:500px;width:1166px;height:1px;background:#bdb28b"></div>
<div class="a" style="left:4px;top:501px;width:1166px;height:24px;background:#f3f0de"></div>
<div class="t" style="left:1026px;top:507px;font-weight:bold;font-size:12px;letter-spacing:0;color:#3a2a10">OK</div>
<div class="a" style="left:1050px;top:503px;width:1px;height:20px;background:linear-gradient(rgba(184,170,120,0.1),#b9ab7c 30%,#b9ab7c 70%,rgba(184,170,120,0.1))"></div>
<div class="a" style="left:1051px;top:503px;width:1px;height:20px;background:linear-gradient(rgba(255,255,255,0.2),#fffff8 30%,#fffff8 70%,rgba(255,255,255,0.2))"></div>
<div class="t" style="left:1058px;top:507px;">Записать</div>
<div class="a" style="left:1112px;top:503px;width:1px;height:20px;background:linear-gradient(rgba(184,170,120,0.1),#b9ab7c 30%,#b9ab7c 70%,rgba(184,170,120,0.1))"></div>
<div class="a" style="left:1113px;top:503px;width:1px;height:20px;background:linear-gradient(rgba(255,255,255,0.2),#fffff8 30%,#fffff8 70%,rgba(255,255,255,0.2))"></div>
<div class="t" style="left:1120px;top:507px;">Закрыть</div>
</body></html>
